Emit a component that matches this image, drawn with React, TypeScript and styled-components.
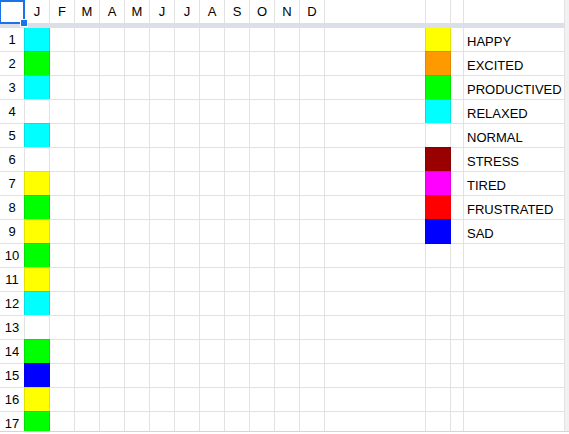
import React from "react";
import styled, { createGlobalStyle } from "styled-components";

const GlobalStyle = createGlobalStyle`
  * { box-sizing: border-box; }
  body {
    margin: 0;
    background: #ffffff;
    color: #000000;
    font-family: "Liberation Sans", Arial, sans-serif;
    font-size: 13px;
    overflow: hidden;
  }
`;

type Paint = { fill: string; edge: string };

const moods: Record<string, Paint> = {
  HAPPY: { fill: "#ffff00", edge: "#e2e200" },
  EXCITED: { fill: "#ff9900", edge: "#e28800" },
  PRODUCTIVED: { fill: "#00ff00", edge: "#00e200" },
  RELAXED: { fill: "#00ffff", edge: "#00e2e2" },
  NORMAL: { fill: "#ffffff", edge: "#e2e2e2" },
  STRESS: { fill: "#990000", edge: "#880000" },
  TIRED: { fill: "#ff00ff", edge: "#e200e2" },
  FRUSTRATED: { fill: "#ff0000", edge: "#f00000" },
  SAD: { fill: "#0000ff", edge: "#0000f0" },
};

const legend = Object.keys(moods);
const months = ["J", "F", "M", "A", "M", "J", "J", "A", "S", "O", "N", "D"];
const january = [
  "RELAXED", "PRODUCTIVED", "RELAXED", "NORMAL", "RELAXED", "NORMAL",
  "HAPPY", "PRODUCTIVED", "HAPPY", "PRODUCTIVED", "HAPPY", "RELAXED",
  "NORMAL", "PRODUCTIVED", "SAD", "HAPPY", "PRODUCTIVED",
];

const Viewport = styled.main`
  display: flex;
  height: calc(100vh - 2px);
  overflow: hidden;
  border-bottom: 1px solid #d5d5d5;
`;

const ScrollGutter = styled.div`
  flex: 0 0 4px;
  background: #f1f1f1;
`;

const Sheet = styled.table`
  flex: 1;
  width: 100%;
  height: max-content;
  table-layout: fixed;
  border-collapse: separate;
  border-spacing: 0;
`;

const Column = styled.col<{ $width?: number }>`
  width: ${(p) => (p.$width ? `${p.$width}px` : "auto")};
`;

const Cell = styled.td`
  height: 24px;
  padding: 0;
  border-right: 1px solid #e2e2e2;
  border-bottom: 1px solid #e2e2e2;
  line-height: 15px;
`;

const HeadCell = styled.th`
  height: 23px;
  padding: 0;
  border-right: 1px solid #e2e2e2;
  font-weight: 400;
  line-height: 15px;
  text-align: center;
`;

const SelectedCell = styled.td`
  position: relative;
  height: 23px;
  padding: 0;
`;

const Selection = styled.span`
  position: absolute;
  inset: 0 0 -1px 0;
  border: 2px solid #1a73e8;
  border-left-width: 1px;
`;

const FillHandle = styled.span`
  position: absolute;
  right: -3px;
  bottom: -4px;
  width: 8px;
  height: 8px;
  border: 1px solid #ffffff;
  background: #1a73e8;
`;

const FreezeBar = styled.td`
  height: 5px;
  padding: 0;
  background: #dadfe8;
`;

const DayCell = styled(Cell).attrs({ as: "th", scope: "row" })`
  font-weight: 400;
  text-align: center;
`;

const MoodCell = styled(Cell)<{ $paint: Paint; $first: boolean }>`
  background: ${(p) => p.$paint.fill};
  border-color: ${(p) => p.$paint.edge};
  box-shadow: -1px 0 0 ${(p) => p.$paint.edge}
    ${(p) => (p.$first ? "" : `, 0 -1px 0 ${p.$paint.edge}, -1px -1px 0 ${p.$paint.edge}`)};
`;

const LabelCell = styled(Cell)`
  padding: 3px 0 0 3px;
  white-space: nowrap;
`;

export default function App() {
  return (
    <>
      <GlobalStyle />
      <Viewport>
        <Sheet>
          <colgroup>
            <Column $width={25} />
            {months.map((_, i) => <Column key={i} $width={25} />)}
            <Column $width={101} />
            <Column $width={25} />
            <Column $width={13} />
            <Column />
          </colgroup>
          <thead>
            <tr>
              <SelectedCell>
                <Selection />
                <FillHandle />
              </SelectedCell>
              {months.map((m, i) => <HeadCell key={i} scope="col">{m}</HeadCell>)}
              <HeadCell as="td" />
              <HeadCell as="td" />
              <HeadCell as="td" />
              <HeadCell as="td" />
            </tr>
            <tr>
              <FreezeBar colSpan={17} />
            </tr>
          </thead>
          <tbody>
            {january.map((mood, row) => {
              const key = legend[row];
              return (
                <tr key={row}>
                  <DayCell>{row + 1}</DayCell>
                  <MoodCell $paint={moods[mood]} $first={row === 0} />
                  {months.slice(1).map((_, i) => <Cell key={i} />)}
                  <Cell />
                  {key ? <MoodCell $paint={moods[key]} $first={row === 0} /> : <Cell />}
                  <Cell />
                  <LabelCell>{key}</LabelCell>
                </tr>
              );
            })}
          </tbody>
        </Sheet>
        <ScrollGutter />
      </Viewport>
    </>
  );
}
